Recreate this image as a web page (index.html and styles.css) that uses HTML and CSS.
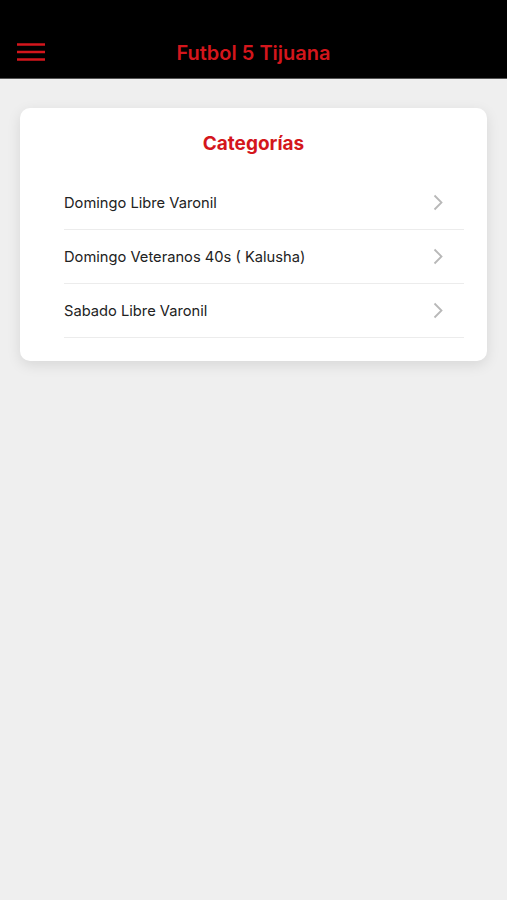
FILE: index.html
```html
<!DOCTYPE html>
<html lang="es">
<head>
    <meta charset="UTF-8">
    <meta name="viewport" content="width=device-width, initial-scale=1.0">
    <title>Futbol 5 Tijuana</title>
    <link rel="stylesheet" href="styles.css">
</head>
<body>

<div class="header">
    <button class="menu" aria-label="Menu">
        <svg width="30" height="20" viewBox="0 0 30 20">
            <path d="M1 2.5h28M1 10h28M1 17.5h28" stroke="#d4161c" stroke-width="2.6" fill="none"/>
        </svg>
    </button>
    <h1>Futbol 5 Tijuana</h1>
</div>

<div class="content">
    <div class="card">
        <h2>Categorías</h2>
        <ul class="list">
            <li>
                <span>Domingo Libre Varonil</span>
                <svg class="chev" width="10" height="17" viewBox="0 0 10 17"><path d="M1.5 1.5l7 7-7 7" stroke="#b8b8b8" stroke-width="1.8" fill="none"/></svg>
            </li>
            <li>
                <span>Domingo Veteranos 40s ( Kalusha)</span>
                <svg class="chev" width="10" height="17" viewBox="0 0 10 17"><path d="M1.5 1.5l7 7-7 7" stroke="#b8b8b8" stroke-width="1.8" fill="none"/></svg>
            </li>
            <li>
                <span>Sabado Libre Varonil</span>
                <svg class="chev" width="10" height="17" viewBox="0 0 10 17"><path d="M1.5 1.5l7 7-7 7" stroke="#b8b8b8" stroke-width="1.8" fill="none"/></svg>
            </li>
        </ul>
    </div>
</div>

</body>
</html>
```

FILE: styles.css
```css
body {
    font-family: Inter, "Noto Sans", sans-serif;
    background-color: #efefef;
    margin: 0;
    min-height: 900px;
}
.header {
    background: #000;
    height: 78px;
    border-bottom: 1px solid #555;
    display: flex;
    align-items: flex-end;
    justify-content: center;
    position: relative;
}
.header h1 {
    margin: 0 0 13px;
    color: #d4161c;
    font-size: 20px;
    font-weight: 600;
    line-height: 24px;
}
.menu {
    position: absolute;
    left: 16px;
    bottom: 16px;
    background: none;
    border: none;
    padding: 0;
    display: flex;
}
.content {
    padding: 29px 20px;
}
.card {
    background: #fff;
    border-radius: 10px;
    box-shadow: 0 4px 14px rgba(0, 0, 0, 0.1);
    padding: 22px 23px 23px 44px;
}
.card h2 {
    margin: 0 0 18px -21px;
    text-align: center;
    color: #d4161c;
    font-size: 19px;
    font-weight: 700;
    line-height: 28px;
}
.list {
    list-style: none;
    margin: 0;
    padding: 0;
}
.list li {
    height: 53px;
    border-bottom: 1px solid #ececec;
    display: flex;
    align-items: center;
    justify-content: space-between;
    padding-right: 21px;
    font-size: 14.7px;
    color: #222;
}
```
